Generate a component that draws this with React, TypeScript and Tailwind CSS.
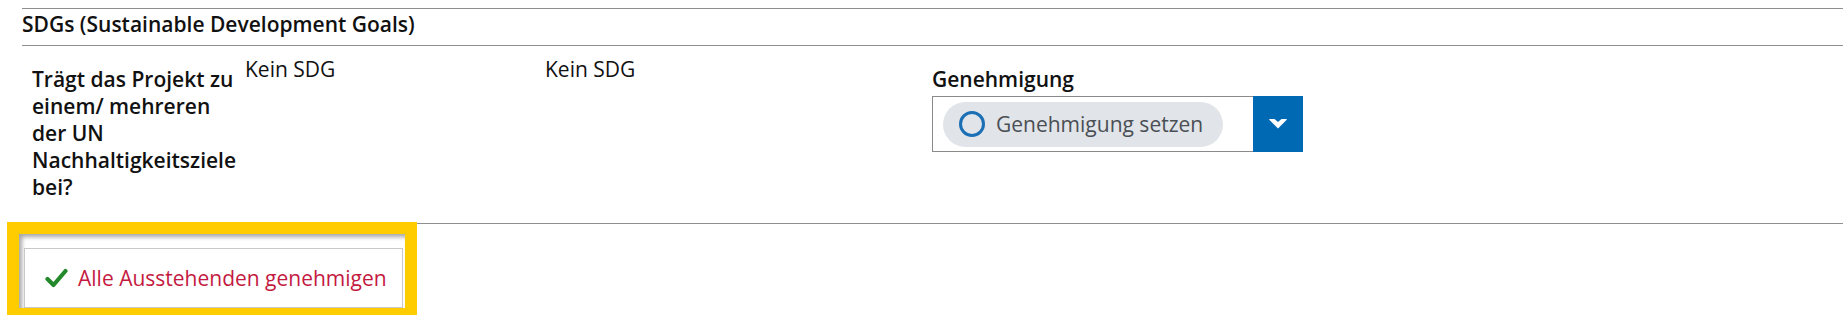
export default function App() {
  return (
    <div className="h-[315px] w-full overflow-hidden bg-white font-['Open_Sans',sans-serif] text-[21px] leading-[27px] text-[#111]">
      <div className="pt-[8px] pl-[22px] pr-[2px]">
        {/* section header */}
        <div className="h-[38px] border-y border-[#8f8f8f] pt-[2px] font-semibold">
          SDGs (Sustainable Development Goals)
        </div>

        {/* content row */}
        <div className="flex h-[178px] border-b border-[#8f8f8f]">
          <div className="w-[223px] shrink-0 pl-[10px] pt-[20px] font-semibold whitespace-nowrap">
            Trägt das Projekt zu
            <br />
            einem/ mehreren
            <br />
            der UN
            <br />
            Nachhaltigkeitsziele
            <br />
            bei?
          </div>
          <div className="w-[300px] shrink-0 pt-[10px]">Kein SDG</div>
          <div className="w-[387px] shrink-0 pt-[10px]">Kein SDG</div>
          <div className="pt-[20px]">
            <div className="font-semibold">Genehmigung</div>
            <div className="mt-[3px] flex h-[56px] w-[371px]">
              <div className="flex flex-1 items-center border-y border-l border-[#8a8a8a] pl-[10px]">
                <div className="flex h-[45px] w-[280px] items-center gap-[11px] rounded-full bg-[#e1e4e8] pl-[16px] text-[#4a4f55]">
                  <span className="h-[26px] w-[26px] shrink-0 rounded-full border-[3px] border-[#1a6fb5]" />
                  <span>Genehmigung setzen</span>
                </div>
              </div>
              <div className="flex w-[50px] items-center justify-center bg-[#0069b4]">
                <svg width="18" height="10" viewBox="0 0 18 10">
                  <path d="M0 0.5 Q0 0 1 0 H5.5 L9 3 L12.5 0 H17 Q18 0 18 0.5 L9 9.5 Z" fill="#fff" />
                </svg>
              </div>
            </div>
          </div>
        </div>
      </div>

      {/* highlighted action */}
      <div className="relative -mt-[2px] ml-[7px] w-[410px] border-[12px] border-[#ffcc00]">
        <div className="pl-[5px] pr-[2px] pt-[14px] shadow-[inset_3px_3px_4px_rgba(0,0,0,0.35)]">
          <button className="flex h-[60px] w-full items-center gap-[10px] border border-[#c8c8c8] bg-white pl-[20px] text-[#c41a3f]">
            <svg width="23" height="20" viewBox="0 0 23 20">
              <path
                d="M2.5 11 L8.5 17 L20.5 3"
                fill="none"
                stroke="#23892b"
                strokeWidth="4.2"
                strokeLinecap="round"
                strokeLinejoin="round"
              />
            </svg>
            <span>Alle Ausstehenden genehmigen</span>
          </button>
        </div>
      </div>
    </div>
  );
}
